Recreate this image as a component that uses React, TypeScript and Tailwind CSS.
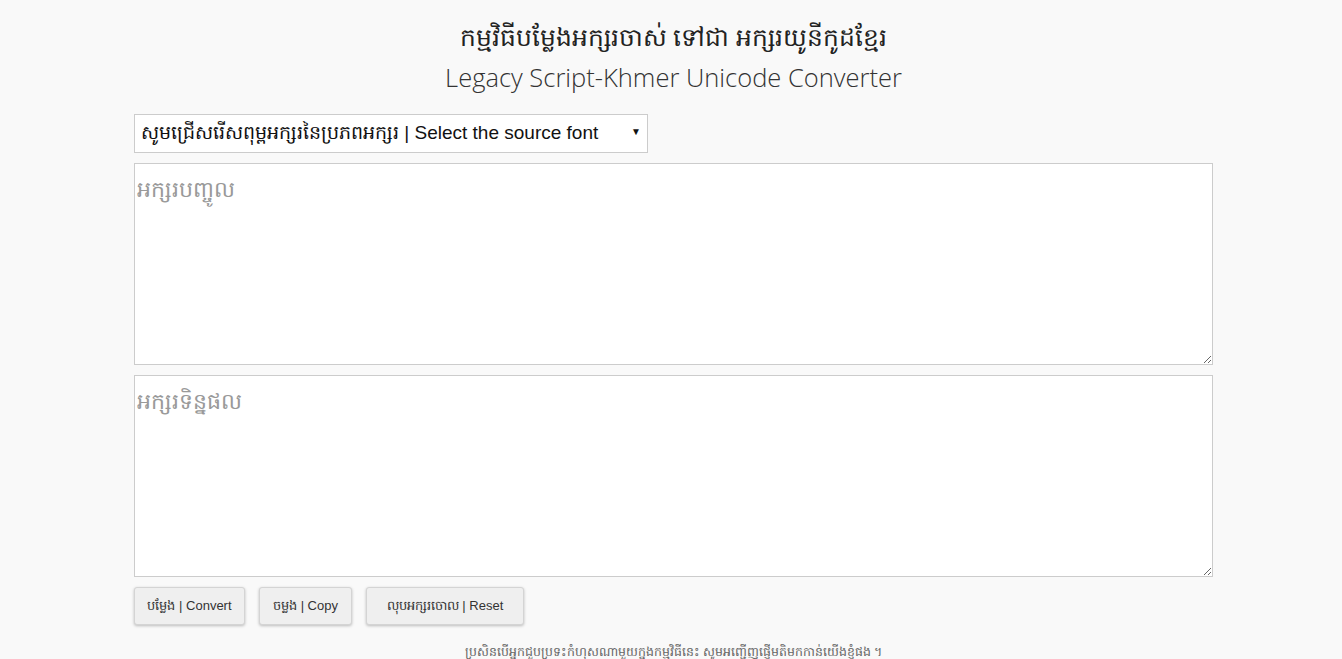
import React, { useState } from "react";

const fonts = [
  "សូមជ្រើសរើសពុម្ពអក្សរនៃប្រភពអក្សរ | Select the source font",
  "Limon",
  "ABC",
  "Baidok",
  "Fk",
  "Khek",
];

const areaClass =
  "mt-[10px] block h-[202px] w-full resize-y border border-[#ccc] bg-white px-[2px] pt-[8px] pb-[2px] text-[22px] text-[#222] outline-none placeholder:text-[#999] font-['Noto_Sans','DejaVu_Sans',sans-serif]";

const buttonClass =
  "h-[38px] rounded-[3px] border border-[#d4d4d4] bg-[#efefef] text-[13px] text-[#333] shadow-[0_1px_3px_rgba(0,0,0,0.25)] hover:bg-[#e6e6e6]";

export default function App() {
  const [source, setSource] = useState("");
  const [result, setResult] = useState("");

  return (
    <div className="min-h-screen bg-[#f9f9f9] text-[#222] font-['Liberation_Sans',Arial,sans-serif]">
      <div className="ml-[134px] w-[1079px] pt-[14px]">
        <h1 className="text-center text-[25px] leading-[44px] text-[#222] font-['Noto_Sans','DejaVu_Sans',sans-serif]">
          កម្មវិធីបម្លែងអក្សរចាស់ ទៅជា អក្សរយូនីកូដខ្មែរ
        </h1>
        <h2 className="text-center text-[25.5px] font-light leading-[38px] text-[#333] font-['Open_Sans',sans-serif]">
          Legacy Script-Khmer Unicode Converter
        </h2>

        <div className="relative mt-[18px] w-[514px]">
          <select
            className="h-[39px] w-full appearance-none border border-[#ccc] bg-white pl-[6px] pr-[20px] text-[19px] text-[#111] outline-none"
            defaultValue={fonts[0]}
          >
            {fonts.map(f => (
              <option key={f}>{f}</option>
            ))}
          </select>
          <span className="pointer-events-none absolute right-[7px] top-[13px] text-[10px] leading-none text-[#111]">▼</span>
        </div>

        <textarea
          value={source}
          onChange={e => setSource(e.target.value)}
          placeholder="អក្សរបញ្ចូល"
          className={areaClass}
        />
        <textarea
          value={result}
          onChange={e => setResult(e.target.value)}
          placeholder="អក្សរទិន្នផល"
          className={areaClass}
        />

        <div className="mt-[10px] flex gap-[14px]">
          <button onClick={() => setResult(source)} className={`${buttonClass} w-[111px]`}>
            បម្លែង | Convert
          </button>
          <button onClick={() => navigator.clipboard?.writeText(result)} className={`${buttonClass} w-[93px]`}>
            ចម្លង | Copy
          </button>
          <button
            onClick={() => {
              setSource("");
              setResult("");
            }}
            className={`${buttonClass} w-[158px]`}
          >
            លុបអក្សរចោល | Reset
          </button>
        </div>

        <p className="mt-[18px] pb-4 text-center text-[12.5px] text-[#666] font-['Noto_Sans','DejaVu_Sans',sans-serif]">
          ប្រសិនបើអ្នកជួបប្រទះកំហុសណាមួយក្នុងកម្មវិធីនេះ សូមអញ្ជើញផ្ញើមតិមកកាន់យើងខ្ញុំផង ។
        </p>
      </div>
    </div>
  );
}
